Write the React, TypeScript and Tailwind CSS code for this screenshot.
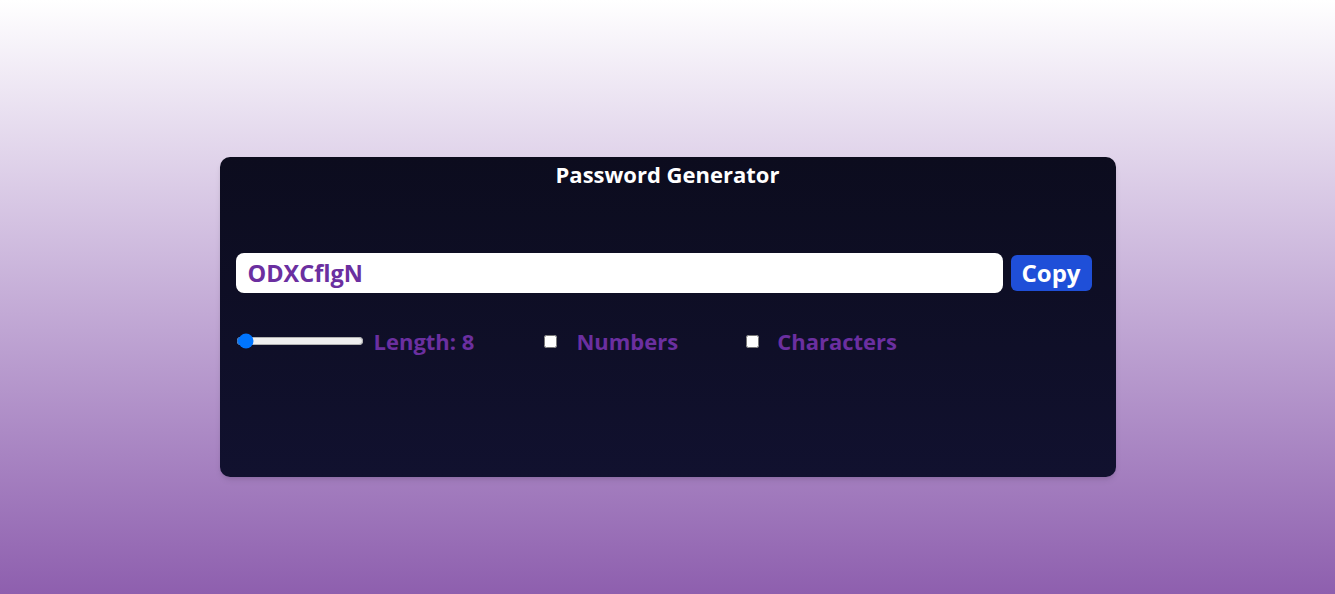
import React, { useState } from "react";

export default function App() {
  const [length, setLength] = useState(8);
  return (
    <div
      className="w-full h-[594px] flex justify-center bg-gradient-to-b from-[#ffffff] to-[#8e5fae]"
      style={{ fontFamily: '"Open Sans", "Noto Sans", sans-serif' }}
    >
      <div className="mt-[157px] w-full max-w-4xl h-[320px] rounded-[10px] bg-gradient-to-b from-[#0c0c1e] to-[#11112f] px-4 pt-[1px] shadow-md">
        <h1 className="text-white text-center text-[22px] leading-8 font-bold">Password Generator</h1>
        <div className="mt-[63px] flex items-center gap-2">
          <input
            type="text"
            readOnly
            value="ODXCflgN"
            className="flex-1 h-10 rounded-lg bg-white px-3 text-[23.5px] font-bold text-[#6b2fa0] outline-none"
          />
          <button className="mr-[8px] h-9 px-[11px] rounded-md bg-[#1f4fd8] text-white text-[24px] font-bold leading-none">
            Copy
          </button>
        </div>
        <div className="mt-8 flex items-center text-[22px] font-bold text-[#6b2fa0] leading-8">
          <div className="flex items-center gap-x-[10px]">
            <input
              type="range"
              min={6}
              max={100}
              value={length}
              onChange={(e) => setLength(Number(e.target.value))}
              className="w-32"
            />
            <label>Length: {length}</label>
          </div>
          <div className="ml-[70px] flex items-center gap-x-[19px]">
            <input type="checkbox" className="w-[13px] h-[13px]" />
            <label>Numbers</label>
          </div>
          <div className="ml-[68px] flex items-center gap-x-[18px]">
            <input type="checkbox" className="w-[13px] h-[13px]" />
            <label>Characters</label>
          </div>
        </div>
      </div>
    </div>
  );
}
